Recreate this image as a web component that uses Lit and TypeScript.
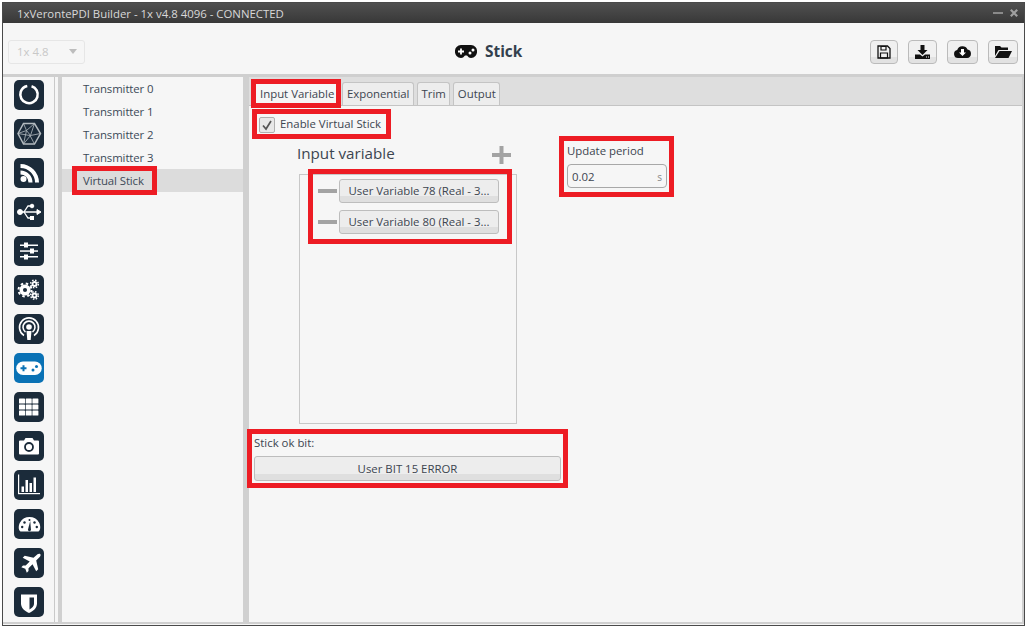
import { LitElement, html, css, svg } from "lit";
import { customElement } from "lit/decorators.js";

const navIcons = [
  svg`<circle cx="15" cy="14.500" r="8.700" fill="none" stroke="#fff" stroke-width="2.600" stroke-dasharray="50 4.700" transform="rotate(-73 15 14.500)"/>`,
  svg`<g fill="none" stroke="#b4bbc0" stroke-width=".8"><path d="M4 14.500L9.500 4.500h11L26.500 14.500l-6 10.500h-11z" stroke-width="1.500"/><path d="M9.500 4.500l3 7 8-7M12.500 11.500l-8.500 3 12 2 4.500 8.500M12.500 11.500l4 5 10-2M12.500 11.500l-3 13.500 7-8.500M20.500 4.500l-4 12"/></g>`,
  svg`<g fill="#fff"><circle cx="9.500" cy="21" r="3"/><path d="M6.500 12.500v4a8 8 0 0 1 8 8h4a12 12 0 0 0-12-12z"/><path d="M6.500 6v4a14.500 14.500 0 0 1 14.500 14.500h4A18.500 18.500 0 0 0 6.500 6z"/></g>`,
  svg`<g fill="#fff" stroke="#fff"><path d="M4 15h20" stroke-width="1.500" fill="none"/><circle cx="6" cy="15" r="2.500"/><path d="M27 15l-4-2.500v5z"/><path d="M10 15l4-6h3M10 15l4 6h3" fill="none" stroke-width="1.300"/><circle cx="18" cy="9" r="1.800"/><rect x="16.500" y="19.500" width="3" height="3"/></g>`,
  svg`<g fill="#fff"><rect x="6" y="8.500" width="18" height="1.500"/><rect x="6" y="14.300" width="18" height="1.500"/><rect x="6" y="20" width="18" height="1.500"/><rect x="10" y="6.500" width="4" height="5"/><rect x="16" y="12.500" width="4" height="5"/><rect x="10" y="18.500" width="4" height="5"/></g>`,
  svg`<g fill="none" stroke="#fff"><circle cx="11" cy="15" r="3.800" stroke-width="3.500"/><circle cx="11" cy="15" r="6.500" stroke-width="2" stroke-dasharray="2.500 2.600"/><circle cx="20.500" cy="9" r="2" stroke-width="1.800"/><circle cx="20.500" cy="9" r="3.800" stroke-width="1.500" stroke-dasharray="1.500 1.500"/><circle cx="20.500" cy="20.500" r="2" stroke-width="1.800"/><circle cx="20.500" cy="20.500" r="3.800" stroke-width="1.500" stroke-dasharray="1.500 1.500"/></g>`,
  svg`<g fill="none" stroke="#fff" stroke-width="1.600"><path d="M10 21.500a9.500 9.500 0 1 1 10 0"/><path d="M11.500 18a6 6 0 1 1 7 0"/></g><circle cx="15" cy="13" r="2.800" fill="#fff"/><path d="M12.500 17h5l-.8 9h-3.400z" fill="#fff"/>`,
  svg`<path d="M9 8.500h12a6.500 6.500 0 0 1 0 13.500H9a6.500 6.500 0 0 1 0-13.500z" fill="#fff"/><path d="M6.500 15.300h6M9.500 12.300v6" stroke="#0a72b5" stroke-width="2"/><circle cx="19" cy="17" r="1.500" fill="#0a72b5"/><circle cx="22.500" cy="13.500" r="1.500" fill="#0a72b5"/>`,
  svg`<g fill="#fff">${[5, 11.7, 18.4].flatMap((x) => [6.5, 12.5, 18.5].map((y) => svg`<rect x="${x}" y="${y}" width="6" height="5" rx=".6"/>`))}</g>`,
  svg`<path d="M6 9.500h4l1.500-2.500h7L20 9.500h4a1 1 0 0 1 1 1v12a1 1 0 0 1-1 1H6a1 1 0 0 1-1-1v-12a1 1 0 0 1 1-1z" fill="#fff"/><circle cx="15" cy="16" r="4" fill="none" stroke="#1b2b3a" stroke-width="1.800"/>`,
  svg`<g fill="#fff"><rect x="4" y="4.500" width="1.200" height="19.500"/><rect x="4" y="23" width="22" height="1.200"/><rect x="7.500" y="16.500" width="2.500" height="5.500"/><rect x="11.500" y="10" width="2.500" height="12"/><rect x="15.500" y="13" width="2.500" height="9"/><rect x="19.500" y="7.500" width="2.500" height="14.500"/></g>`,
  svg`<path d="M6.500 22.500C4 21 4.500 16 6 13.500 8 9.800 11.500 8 15.500 8s7.500 1.800 9.500 5.500c1.500 2.500 2 7.500-.5 9z" fill="#fff"/><path d="M14 20.500l2.200-8.500.8 8.800a1.500 1.500 0 0 1-3-.3z" fill="#1b2b3a"/><g fill="#1b2b3a"><circle cx="8.200" cy="18" r="1.200"/><circle cx="10.500" cy="13.500" r="1.200"/><circle cx="15.500" cy="11" r="1"/><circle cx="22.800" cy="18" r="1.200"/><circle cx="20.500" cy="13.500" r="1.200"/></g>`,
  svg`<path d="M23.500 6.300c1-.9 2.200-.7 2.700-.2s.6 1.700-.3 2.700l-3.700 3.700 2 8.800-2 2-3.700-7-4 4v2.700l-1.700 1.700-1.500-4-4-1.500 1.700-1.700h2.700l4-4-7-3.700 2-2 8.800 2z" fill="#fff"/>`,
  svg`<path d="M7 7.500h16v9c0 4.500-3.500 7.500-8 9.500-4.500-2-8-5-8-9.500z" fill="#fff"/><path d="M15.500 10.500h4.500v6.500c0 2.300-2 4-4.500 5.500z" fill="#1b2b3a"/>`,
];

@customElement("app-root")
export class AppRoot extends LitElement {
  static styles = css`
    :host {
      display: block;
      position: relative;
      width: 1025px;
      height: 628px;
      background: #fff;
      font-family: "Open Sans", "Noto Sans", sans-serif;
      font-size: 11.4px;
      color: #3c4550;
      overflow: hidden;
    }
    .window {
      margin: 2px 0 0 2px;
      height: 624px;
      box-sizing: border-box;
      border: 1px solid #4a4a4a;
      display: flex;
      flex-direction: column;
      background: #f6f6f6;
    }
    .title {
      height: 20px;
      flex: none;
      background: linear-gradient(#505050, #444 50%, #383838);
      color: #d8d8d8;
      display: flex;
      align-items: center;
      justify-content: space-between;
      padding: 0 6px 0 14px;
    }
    .winbtns {
      display: flex;
      gap: 7px;
      align-items: center;
    }
    .toolbar {
      height: 54px;
      flex: none;
      box-sizing: border-box;
      display: grid;
      grid-template-columns: 447px auto 1fr;
      align-items: center;
      padding: 6px 6px 0 5px;
      border-bottom: 3px solid #cfcfcf;
    }
    .version {
      width: 77px;
      height: 24px;
      box-sizing: border-box;
      border: 1px solid #e6e6e6;
      border-radius: 3px;
      color: #c8c8c8;
      display: flex;
      align-items: center;
      justify-content: space-between;
      padding: 0 7px 0 8px;
    }
    .caret {
      width: 0;
      height: 0;
      border: 4px solid transparent;
      border-top: 5px solid #bdbdbd;
      border-bottom: 0;
    }
    .heading {
      display: flex;
      align-items: center;
      gap: 8px;
      font-weight: 700;
      font-size: 15.4px;
      color: #33404d;
    }
    .actions {
      justify-self: end;
      display: flex;
      gap: 10px;
    }
    .tool {
      height: 24px;
      box-sizing: border-box;
      border: 1px solid #bbb;
      border-radius: 4px;
      background: linear-gradient(#f0f0f0 75%, #e2e2e2 75%);
      display: flex;
      align-items: center;
      justify-content: center;
    }
    .w28 { width: 28px; }
    .w29 { width: 29px; }
    .w30 { width: 30px; }
    .w31 { width: 31px; }
    .body {
      flex: 1;
      display: flex;
      min-height: 0;
      border-bottom: 2px solid #cfcfcf;
      margin-bottom: 1px;
    }
    .nav {
      width: 52px;
      flex: none;
      box-sizing: border-box;
      border-right: 1px solid #c9c9c9;
      padding: 3px 0 0 11px;
      display: flex;
      flex-direction: column;
      gap: 9px;
    }
    .navicon {
      width: 30px;
      height: 30px;
      border-radius: 5px;
      background: #1b2b3a;
      display: block;
    }
    .navicon.active {
      background: #0a72b5;
    }
    .list {
      width: 181px;
      flex: none;
      margin-left: 3px;
      border-left: 4px solid #d0d0d0;
      border-right: 6px solid #d0d0d0;
    }
    .item {
      height: 23px;
      line-height: 23px;
      padding-left: 21px;
      color: #3c4a58;
      letter-spacing: -0.1px;
    }
    .item.sel {
      background: #dcdcdc;
    }
    .main {
      flex: 1;
      display: flex;
      flex-direction: column;
      min-width: 0;
      border-right: 2px solid #cfcfcf;
    }
    .tabs {
      height: 29px;
      flex: none;
      box-sizing: border-box;
      background: #dedede;
      border-bottom: 1px solid #c4c4c4;
      display: flex;
      align-items: flex-end;
      gap: 3px;
      padding-left: 4px;
    }
    .tab {
      height: 23px;
      line-height: 22px;
      box-sizing: border-box;
      border: 1px solid #c4c4c4;
      border-bottom: 0;
      border-radius: 3px 3px 0 0;
      padding: 0 3.500px;
      background: #ededed;
    }
    .tab.on {
      background: #f6f6f6;
      height: 24px;
      margin-bottom: -1px;
      padding: 0 6px;
      margin-right: -2px;
    }
    .content {
      flex: 1;
      padding: 9px 0 0 5px;
      display: flex;
      flex-direction: column;
    }
    .check {
      display: flex;
      align-items: center;
      gap: 5px;
      height: 19px;
      padding-left: 5px;
    }
    .check .txt {
      margin-top: -2px;
    }
    .box {
      width: 16px;
      height: 16px;
      box-sizing: border-box;
      border: 1px solid #b0b0b0;
      border-radius: 2px;
      background: #e8e8e8;
      display: flex;
      align-items: center;
      justify-content: center;
    }
    .columns {
      display: flex;
      margin-top: 9px;
    }
    .vars {
      width: 218px;
      margin-left: 45px;
    }
    .varhead {
      display: flex;
      align-items: center;
      justify-content: space-between;
      height: 24px;
      font-size: 15.200px;
      padding-right: 6px;
    }
    .varhead span {
      margin: 0 0 5px -2px;
    }
    .plus {
      width: 19px;
      height: 18px;
      display: block;
    }
    .varbox {
      margin-top: 7px;
      height: 250px;
      box-sizing: border-box;
      border: 1px solid #c8c8c8;
      padding: 4px 17px 0 18px;
      display: flex;
      flex-direction: column;
      gap: 7px;
    }
    .varrow {
      display: flex;
      align-items: center;
      gap: 2px;
    }
    .minus {
      width: 19px;
      height: 4px;
      background: #a3a3a3;
      flex: none;
    }
    .btn {
      border: 1px solid #bdbdbd;
      border-radius: 3px;
      background: linear-gradient(#ededed 75%, #dfdfdf 75%);
      text-align: center;
      height: 24px;
      line-height: 22px;
      box-sizing: border-box;
      color: #3c4550;
      white-space: nowrap;
    }
    .varrow .btn {
      flex: 1;
    }
    .period {
      margin-left: 50px;
      width: 100px;
    }
    .period .lab {
      height: 16px;
      line-height: 16px;
    }
    .field {
      margin-top: 5px;
      height: 24px;
      box-sizing: border-box;
      border: 1px solid #a8a8a8;
      border-radius: 4px;
      display: flex;
      align-items: center;
      justify-content: space-between;
      padding: 0 4px;
    }
    .unit {
      font-size: 10px;
      color: #888;
      margin-top: 2px;
    }
    .okbit {
      margin-top: 10px;
      width: 307px;
    }
    .okbit .lab {
      height: 22px;
      line-height: 18px;
    }
    .okbit .btn {
      height: 25px;
      line-height: 23px;
    }
    .mark {
      position: absolute;
      border: 5px solid #ed1c24;
      box-sizing: border-box;
      pointer-events: none;
    }
  `;

  private marks = [
    [72, 166, 85, 29],
    [251, 79, 90, 29],
    [252, 109, 139, 30],
    [308, 169, 204, 75],
    [559, 136, 115, 61],
    [247, 429, 321, 59],
  ];

  render() {
    const tabs = ["Input Variable", "Exponential", "Trim", "Output"];
    return html`
      <div class="window">
        <div class="title">
          <span>1xVerontePDI Builder - 1x v4.8 4096 - CONNECTED</span>
          <span class="winbtns">
            <svg width="10" height="10" viewBox="0 0 10 10"><rect y="4" width="10" height="2" fill="#8a8a8a"/></svg>
            <svg width="8" height="8" viewBox="0 0 8 8"><path d="M.8.8l6.400 6.400M7.200.8L.8 7.200" stroke="#a0a0a0" stroke-width="2.200"/></svg>
          </span>
        </div>
        <div class="toolbar">
          <div class="version"><span>1x 4.8</span><span class="caret"></span></div>
          <div class="heading">
            <svg width="22" height="13" viewBox="0 0 22 13"><path d="M6 0h10a6 6 0 0 1 6 6.500A6 6 0 0 1 16 13c-2 0-3-1.500-4-2.500h-2C9 11.500 8 13 6 13A6 6 0 0 1 0 6.500 6 6 0 0 1 6 0z" fill="#111"/><path d="M3 6.500h6M6 3.500v6" stroke="#fff" stroke-width="1.800"/><circle cx="15" cy="8" r="1.500" fill="#fff"/><circle cx="18" cy="5" r="1.500" fill="#fff"/></svg>
            <span>Stick</span>
          </div>
          <div class="actions">
            <div class="tool w28"><svg width="14" height="14" viewBox="0 0 14 14"><path d="M1 1h9.500L13 3.500V13H1z" fill="none" stroke="#111" stroke-width="1.300"/><path d="M4 1.500h5v3.500H4zM3.500 8h7v5h-7z" fill="none" stroke="#111" stroke-width="1.200"/></svg></div>
            <div class="tool w29"><svg width="15" height="15" viewBox="0 0 15 15"><path d="M5.500 1h4v5h3L7.500 11 2.500 6h3z" fill="#111"/><path d="M0 10.500h5l2.500 2 2.500-2h5V15H0z" fill="#111"/><rect x="11" y="12.500" width="1" height="1" fill="#fff"/><rect x="13" y="12.500" width="1" height="1" fill="#fff"/></svg></div>
            <div class="tool w31"><svg width="17" height="13" viewBox="0 0 17 13"><path d="M4 13a4 4 0 0 1-.8-7.900A5.500 5.500 0 0 1 13.500 4.500 4.300 4.300 0 0 1 13 13z" fill="#111"/><path d="M7 4h3v3.500h2L8.500 11 5 7.500h2z" fill="#fff"/></svg></div>
            <div class="tool w30"><svg width="17" height="13" viewBox="0 0 17 13"><path d="M0 1h5l1.500 1.500H13V5H3.500L0 11z" fill="#111"/><path d="M4.500 6H17l-3.500 7H0z" fill="#111"/></svg></div>
          </div>
        </div>
        <div class="body">
          <div class="nav">
            ${navIcons.map(
              (ic, i) =>
                html`<svg class="navicon ${i === 7 ? "active" : ""}" viewBox="0 0 30 30">${ic}</svg>`
            )}
          </div>
          <div class="list">
            ${["Transmitter 0", "Transmitter 1", "Transmitter 2", "Transmitter 3", "Virtual Stick"].map(
              (t, i) => html`<div class="item ${i === 4 ? "sel" : ""}">${t}</div>`
            )}
          </div>
          <div class="main">
            <div class="tabs">
              ${tabs.map((t, i) => html`<div class="tab ${i === 0 ? "on" : ""}">${t}</div>`)}
            </div>
            <div class="content">
              <div class="check">
                <span class="box"><svg width="12" height="12" viewBox="0 0 12 12"><path d="M2 6.500l3 3.500 5-8" fill="none" stroke="#555" stroke-width="1.700"/></svg></span>
                <span class="txt">Enable Virtual Stick</span>
              </div>
              <div class="columns">
                <div class="vars">
                  <div class="varhead">
                    <span>Input variable</span>
                    <svg class="plus" viewBox="0 0 19 18"><path d="M7.500 0h4v7H19v4h-7.500v7h-4v-7H0V7h7.500z" fill="#a3a3a3"/></svg>
                  </div>
                  <div class="varbox">
                    ${["User Variable 78 (Real - 3...", "User Variable 80 (Real - 3..."].map(
                      (t) => html`<div class="varrow"><span class="minus"></span><div class="btn">${t}</div></div>`
                    )}
                  </div>
                </div>
                <div class="period">
                  <div class="lab">Update period</div>
                  <div class="field"><span>0.02</span><span class="unit">s</span></div>
                </div>
              </div>
              <div class="okbit">
                <div class="lab">Stick ok bit:</div>
                <div class="btn">User BIT 15 ERROR</div>
              </div>
            </div>
          </div>
        </div>
      </div>
      ${this.marks.map(
        ([x, y, w, h]) =>
          html`<div class="mark" style="left:${x}px;top:${y}px;width:${w}px;height:${h}px"></div>`
      )}
    `;
  }
}
